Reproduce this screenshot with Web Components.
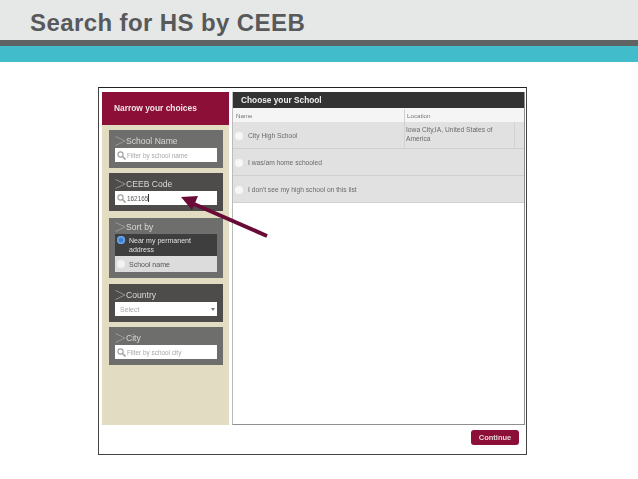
<!DOCTYPE html>
<html>
<head>
<meta charset="utf-8">
<title>Search for HS by CEEB</title>
<style>
    html, body { margin: 0; padding: 0; background: #fff; }
    body { width: 638px; height: 479px; overflow: hidden; font-family: "Liberation Sans", Arial, sans-serif; }
</style>
</head>
<body>
<slide-header>Search for HS by CEEB</slide-header>
<school-window>
    <filter-panel slot="filters" label="School Name" tone="mid" placeholder="Filter by school name"></filter-panel>
    <filter-panel slot="filters" label="CEEB Code" tone="dark" value="162165" style="margin-top:5px"></filter-panel>
    <sort-panel slot="filters" style="margin-top:7px"></sort-panel>
    <filter-panel slot="filters" label="Country" tone="dark" select style="margin-top:6px"></filter-panel>
    <filter-panel slot="filters" label="City" tone="mid" placeholder="Filter by school city" style="margin-top:5px"></filter-panel>

    <school-row slot="rows" location="Iowa City,IA, United States of America">City High School</school-row>
    <school-row slot="rows">I was/am home schooled</school-row>
    <school-row slot="rows">I don't see my high school on this list</school-row>
</school-window>

<script>
const chevron = `<svg width="11" height="10" viewBox="0 0 11 10" fill="none" stroke="#a3a3a3" stroke-width="0.8"><path d="M0.5 0.5L10 5L0.5 9.5"/></svg>`;
const lens = `<svg width="9" height="9" viewBox="0 0 9 9" fill="none" stroke="#a0a0a0" stroke-width="1.1"><circle cx="3.5" cy="3.5" r="2.6"/><path d="M5.5 5.5L8.5 8.5" stroke-width="1.6"/></svg>`;

class SlideHeader extends HTMLElement {
    constructor() {
        super();
        this.attachShadow({mode: 'open'}).innerHTML = `
            <style>
                :host { display: block; }
                .title {
                    height: 40px; box-sizing: border-box; padding: 10px 0 0 30px;
                    background: #e6e7e7; color: #58595b;
                    font: bold 24px/26px "Liberation Sans", Arial, sans-serif;
                    letter-spacing: 0.4px;
                }
                .rule { height: 6px; background: #5f6364; }
                .band { height: 16px; background: #40bccb; }
            </style>
            <div class="title"><slot></slot></div>
            <div class="rule"></div>
            <div class="band"></div>`;
    }
}

class FilterPanel extends HTMLElement {
    connectedCallback() {
        if (this.shadowRoot) return;
        const isSelect = this.hasAttribute('select');
        const value = this.getAttribute('value');
        const text = value || this.getAttribute('placeholder') || '';
        const field = isSelect
            ? `<span class="ph sel">Select</span><span class="caret"></span>`
            : `${lens}<span class="${value ? 'val' : 'ph'}">${text}</span>${value ? '<span class="cursor"></span>' : ''}`;
        this.attachShadow({mode: 'open'}).innerHTML = `
            <style>
                :host { display: block; }
                .panel {
                    height: 38px; box-sizing: border-box; padding: 3px 6px 0;
                    background: ${this.getAttribute('tone') === 'dark' ? '#4d4c4b' : '#6e6e6d'};
                }
                .label {
                    display: flex; align-items: center; gap: 0; height: 15px;
                    color: #d8d8d8; font-size: 8.6px;
                }
                .field {
                    display: flex; align-items: center; gap: 1px; position: relative;
                    height: 14px; padding-left: 2px; background: #fff;
                    font-size: 6.4px;
                }
                .ph { color: #a8a8a8; }
                .sel { padding-left: 3px; font-size: 7px; }
                .val { color: #555; }
                .cursor { width: 1px; height: 8px; background: #333; margin-left: -1px; }
                .caret {
                    position: absolute; right: 2px; top: 6px;
                    border: 2.5px solid transparent; border-top: 3px solid #777; border-bottom: 0;
                }
            </style>
            <div class="panel">
                <div class="label">${chevron}<span>${this.getAttribute('label')}</span></div>
                <div class="field">${field}</div>
            </div>`;
    }
}

class SortPanel extends HTMLElement {
    constructor() {
        super();
        this.attachShadow({mode: 'open'}).innerHTML = `
            <style>
                :host { display: block; }
                .panel { height: 60px; box-sizing: border-box; padding: 2px 6px 0; background: #6e6e6d; }
                .label { display: flex; align-items: center; gap: 0; height: 14px; color: #d8d8d8; font-size: 8.6px; }
                .opt { display: flex; gap: 4px; padding-left: 2px; font-size: 7px; line-height: 9px; }
                .on { height: 22px; box-sizing: border-box; padding-top: 2px; background: #3f3e3e; color: #e0e0e0; }
                .off { height: 16px; align-items: center; background: #dcdcdc; color: #555; }
                i { flex: none; width: 8px; height: 8px; border-radius: 50%; background: #f2f2f2; }
                .on i { background: #3b82d6; box-shadow: inset 0 0 0 1.5px #6fa6e6; }
            </style>
            <div class="panel">
                <div class="label">${chevron}<span>Sort by</span></div>
                <div class="opt on"><i></i><span>Near my permanent<br>address</span></div>
                <div class="opt off"><i></i><span>School name</span></div>
            </div>`;
    }
}

class SchoolRow extends HTMLElement {
    connectedCallback() {
        if (this.shadowRoot) return;
        const location = this.getAttribute('location');
        this.attachShadow({mode: 'open'}).innerHTML = `
            <style>
                :host { display: block; }
                .row {
                    display: flex; height: 27px; box-sizing: border-box;
                    background: #e1e1e1; border-bottom: 1px solid #d0d0d0;
                    color: #6a6a6a; font-size: 6.7px;
                }
                .name { width: 171px; flex: none; display: flex; align-items: center; gap: 5px; padding: 1px 0 0 2px; box-sizing: border-box; }
                i { flex: none; width: 8px; height: 8px; border-radius: 50%; background: #f7f7f7; }
                .loc {
                    width: 111px; box-sizing: border-box; padding: 3px 0 0 1px; line-height: 9px;
                    border-left: 1px solid #d2d2d2; border-right: 1px solid #d2d2d2;
                }
            </style>
            <div class="row">
                <div class="name"><i></i><span><slot></slot></span></div>
                ${location ? `<div class="loc">${location}</div>` : ''}
            </div>`;
    }
}

class SchoolWindow extends HTMLElement {
    constructor() {
        super();
        this.attachShadow({mode: 'open'}).innerHTML = `
            <style>
                :host { display: block; position: relative; width: 429px; height: 368px; margin: 25px 0 0 98px; box-sizing: border-box; }
                .frame {
                    height: 100%; box-sizing: border-box; padding: 4px 1px 0 3px;
                    border: 1px solid #444; border-top-color: #222; background: #fff;
                    filter: blur(0.45px);
                }
                .cols { display: flex; gap: 3px; height: 333px; }
                .side { width: 127px; flex: none; background: #e2dcc2; }
                .side h2 {
                    margin: 0; height: 33px; box-sizing: border-box; padding: 11px 0 0 12px;
                    background: #8c0f38; color: #f3e6ea; font-size: 8.4px; line-height: 10px; font-weight: bold;
                }
                .filters { padding: 5px 6px 0 7px; }
                .main { flex: 1; box-sizing: border-box; border: 1px solid #8f8f8f; border-top: 0; border-left: 1px solid #bbb; }
                .main h2 {
                    margin: 0; height: 16px; box-sizing: border-box; padding: 3px 0 0 8px;
                    background: #333; color: #eee; font-size: 8.3px; line-height: 10px; font-weight: bold;
                }
                .heads { display: flex; height: 14px; align-items: center; background: #f5f5f5; color: #777; font-size: 6.2px; padding-top: 1px; box-sizing: border-box; }
                .heads span:first-child { width: 171px; padding-left: 3px; box-sizing: border-box; line-height: 13px; }
                .heads span:last-child { padding-left: 2px; line-height: 13px; border-left: 1px solid #d2d2d2; }
                .foot { display: flex; justify-content: flex-end; padding: 5px 6px 0 0; }
                button {
                    width: 48px; height: 15px; padding: 0; border: 0; border-radius: 3px;
                    background: #8c0f38; color: #e8d6dc; font: bold 7.5px "Liberation Sans", Arial, sans-serif;
                }
                svg.arrow { position: absolute; left: 0; top: 0; overflow: visible; }
            </style>
            <div class="frame">
                <div class="cols">
                    <div class="side">
                        <h2>Narrow your choices</h2>
                        <div class="filters"><slot name="filters"></slot></div>
                    </div>
                    <div class="main">
                        <h2>Choose your School</h2>
                        <div class="heads"><span>Name</span><span>Location</span></div>
                        <slot name="rows"></slot>
                    </div>
                </div>
                <div class="foot"><button>Continue</button></div>
            </div>
            <svg class="arrow" width="429" height="368" viewBox="98 87 429 368">
                <path d="M267 236L194 204" stroke="#6a0a36" stroke-width="4" fill="none"/>
                <path d="M181 197L198 196L192 210Z" fill="#6a0a36"/>
            </svg>`;
    }
}

customElements.define('slide-header', SlideHeader);
customElements.define('filter-panel', FilterPanel);
customElements.define('sort-panel', SortPanel);
customElements.define('school-row', SchoolRow);
customElements.define('school-window', SchoolWindow);
</script>
</body>
</html>
